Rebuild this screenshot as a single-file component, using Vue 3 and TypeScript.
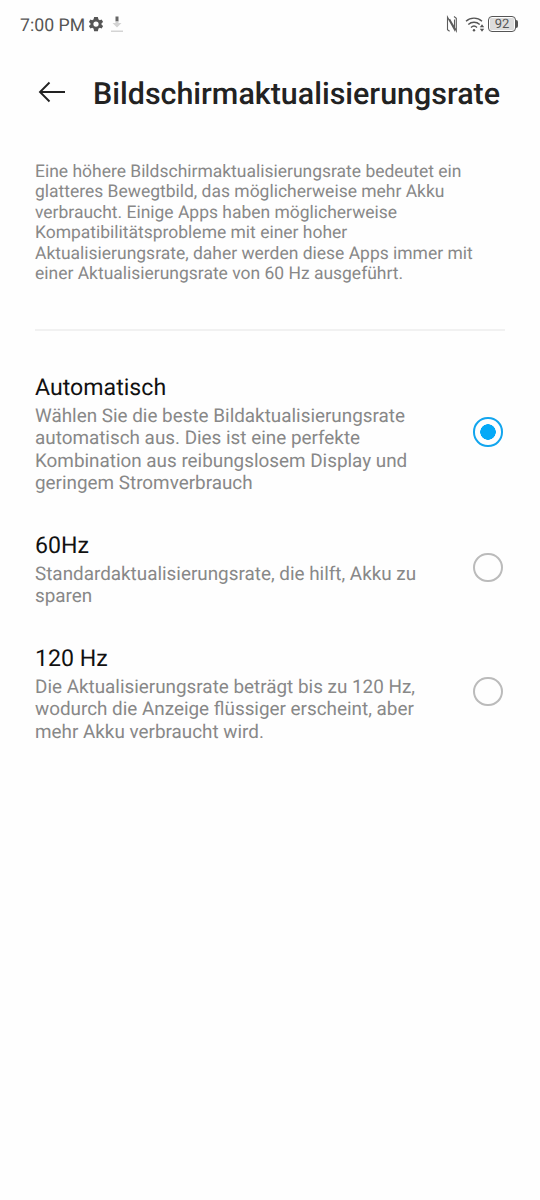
<script setup lang="ts">
import { ref } from 'vue'

interface RateOption {
  id: string
  title: string
  lines: string[]
}

const selected = ref('auto')

const intro: string[] = [
  'Eine höhere Bildschirmaktualisierungsrate bedeutet ein',
  'glatteres Bewegtbild, das möglicherweise mehr Akku',
  'verbraucht. Einige Apps haben möglicherweise',
  'Kompatibilitätsprobleme mit einer hoher',
  'Aktualisierungsrate, daher werden diese Apps immer mit',
  'einer Aktualisierungsrate von 60 Hz ausgeführt.',
]

const options: RateOption[] = [
  {
    id: 'auto',
    title: 'Automatisch',
    lines: [
      'Wählen Sie die beste Bildaktualisierungsrate',
      'automatisch aus. Dies ist eine perfekte',
      'Kombination aus reibungslosem Display und',
      'geringem Stromverbrauch',
    ],
  },
  { id: '60', title: '60Hz', lines: ['Standardaktualisierungsrate, die hilft, Akku zu', 'sparen'] },
  {
    id: '120',
    title: '120 Hz',
    lines: [
      'Die Aktualisierungsrate beträgt bis zu 120 Hz,',
      'wodurch die Anzeige flüssiger erscheint, aber',
      'mehr Akku verbraucht wird.',
    ],
  },
]
</script>

<template>
  <main class="screen">
    <div class="status">
      <span class="clock">7:00 PM</span>
      <svg class="gear" width="18" height="18" viewBox="0 0 24 24">
        <path fill="#555" fill-rule="evenodd" d="M19.400 13a7.600 7.600 0 0 0 0-2l2.100-1.600-2-3.500-2.500 1a7.500 7.500 0 0 0-1.700-1L14.500 2.500h-5L8.700 5.900a7.500 7.500 0 0 0-1.700 1l-2.500-1-2 3.500L4.600 11a7.600 7.600 0 0 0 0 2l-2.100 1.600 2 3.500 2.500-1a7.500 7.500 0 0 0 1.700 1l.8 3.400h5l.8-3.400a7.500 7.500 0 0 0 1.700-1l2.500 1 2-3.500zM12 15.500a3.500 3.500 0 1 1 0-7 3.500 3.500 0 0 1 0 7z" />
      </svg>
      <svg class="download" width="12" height="17" viewBox="0 0 12 17">
        <path fill="#666" d="M4.500 .5h3v5h-3z" />
        <path fill="#d4d4d4" d="M4.500 5.500h3V7h3L6 11.500 1.500 7h3zM0 14.500h12V16H0z" />
      </svg>
      <span class="grow" />
      <svg class="nfc" width="12" height="18" viewBox="0 0 12 18">
        <path d="M3.600 16.300L1.500 14.800V2.200l7 12.600V4.500M8 1.500l2.300 1.700v12.600L3.600 4" fill="none" stroke="#5c5c5c" stroke-width="1.100" />
      </svg>
      <svg class="wifi" width="20" height="18" viewBox="0 0 20 18">
        <path d="M1 6.200a12 12 0 0 1 16 0M3.300 9.400a8.500 8.500 0 0 1 11.400 0M6 12.400a4.500 4.500 0 0 1 6 0" fill="none" stroke="#555" stroke-width="1.400" />
        <circle cx="9" cy="15.200" r="1.200" fill="#555" />
        <path d="M14.800 12.200l2.200-2.900 2.200 2.900zM14.800 13.800h4.400L17 16.700z" fill="#555" />
      </svg>
      <span class="battery"><span class="level">92</span></span>
      <span class="cap" />
    </div>

    <header class="header">
      <svg class="back" width="28" height="22" viewBox="0 0 28 22">
        <path d="M27 11H2M11.500 1.500L2 11l9.500 9.500" fill="none" stroke="#222" stroke-width="1.900" />
      </svg>
      <h1>Bildschirmaktualisierungsrate</h1>
    </header>

    <p class="intro"><span v-for="line in intro" :key="line">{{ line }}</span></p>
    <hr />

    <section class="options">
      <div v-for="option in options" :key="option.id" class="option" @click="selected = option.id">
        <div class="copy">
          <h2>{{ option.title }}</h2>
          <p><span v-for="line in option.lines" :key="line">{{ line }}</span></p>
        </div>
        <span class="radio" :class="{ on: selected === option.id }" />
      </div>
    </section>
  </main>
</template>

<style>
body { margin: 0; background: #fefefe; }
</style>

<style scoped>
.screen { box-sizing: border-box; width: 540px; height: 1200px; background: #fefefe; font-family: Roboto, sans-serif; overflow: hidden; text-rendering: geometricPrecision; }
.status { display: flex; align-items: center; height: 48px; padding: 0 23px 0 20px; color: #555; }
.clock { font-size: 17.700px; line-height: 20px; margin-top: 3px; }
.gear { margin-left: 2px; }
.download { margin-left: 6px; }
.grow { flex: 1; }
.wifi { margin-left: 7px; }
.battery { box-sizing: border-box; width: 28px; height: 16px; padding: 1px; margin-left: 3px; border: 1.500px solid #555; border-radius: 4px; }
.level { display: block; height: 12px; border-radius: 1px; background: #dcdcdc; font-size: 13px; line-height: 14px; text-align: center; }
.cap { width: 2px; height: 8px; border-radius: 0 2px 2px 0; background: #555; margin-right: -1px; }
.header { display: flex; align-items: center; height: 90px; padding-left: 38px; }
.back { margin-top: -3px; }
h1 { margin: 2px 0 0 27px; font-size: 30.450px; font-weight: 500; color: #222; white-space: nowrap; }
p { margin: 0; }
p span { display: block; white-space: nowrap; }
.intro { margin: 24px 35px 0; font-size: 17.480px; line-height: 20.400px; color: #888; }
hr { margin: 44.600px 35px 0; border: 0; height: 2px; background: #f1f1f1; }
.options { padding: 42px 37.500px 0 35px; }
.option { display: flex; align-items: center; justify-content: space-between; margin-bottom: 35.700px; }
h2 { margin: 0; font-size: 23.150px; line-height: 30px; font-weight: 400; color: #111; }
.copy p { margin-top: 2px; margin-bottom: .5px; font-size: 18.880px; line-height: 22.400px; color: #888; }
.radio { box-sizing: border-box; width: 29.500px; height: 29.500px; margin-bottom: 4px; border: 2px solid #bbb; border-radius: 50%; }
.radio.on { border-color: #12a5ee; background: radial-gradient(circle, #05a9f7 7.500px, transparent 8px); }
</style>
